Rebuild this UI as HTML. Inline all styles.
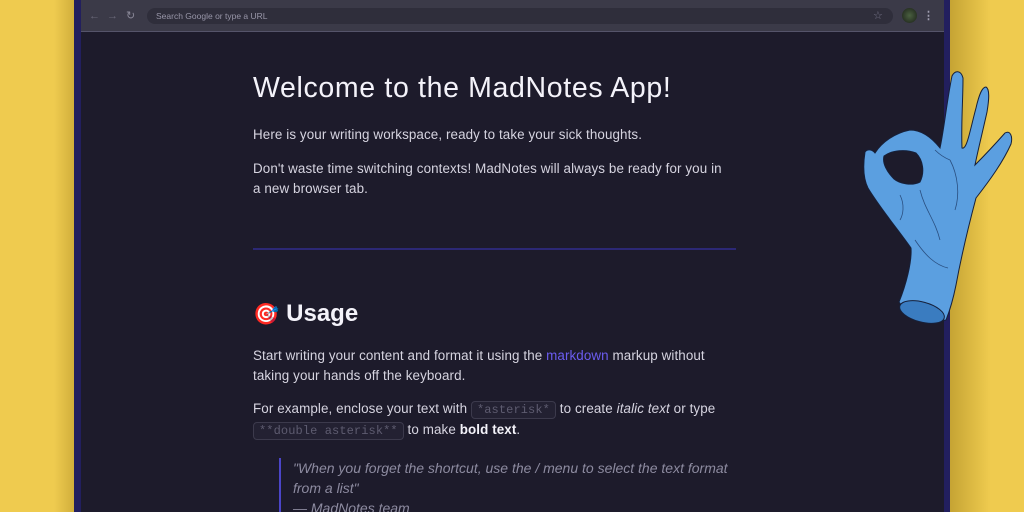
<!DOCTYPE html>
<html><head><meta charset="utf-8"><style>
*{margin:0;padding:0;box-sizing:border-box}
html,body{width:1024px;height:512px;overflow:hidden}
body{background:#efcb4f;position:relative;font-family:"Liberation Sans",sans-serif}
.shadowR{position:absolute;left:950px;top:0;width:40px;height:512px;background:linear-gradient(90deg,rgba(120,90,0,.35),rgba(120,90,0,0))}
.shadowL{position:absolute;left:54px;top:0;width:20px;height:512px;background:linear-gradient(270deg,rgba(120,90,0,.25),rgba(120,90,0,0))}
.frame{position:absolute;left:74px;top:0;width:876px;height:512px;background:#221f5e}
.win{position:absolute;left:81px;top:0;width:863px;height:512px;background:#1d1b2b;overflow:hidden}
.bar{position:absolute;left:0;top:0;width:863px;height:32px;background:#3b3a48;border-bottom:1px solid #55546a}
.url{position:absolute;left:66px;top:8px;width:746px;height:16px;border-radius:8px;background:#2f2e3b;color:#9896a8;font-size:8.5px;line-height:16px;padding-left:9px}
.nav{position:absolute;top:8px;color:#6a6878;font-size:11px;line-height:16px}
.content{position:absolute;left:172px;top:0;width:484px;height:512px;color:#d6d4e0}
h1{position:absolute;top:72px;font-size:28.5px;font-weight:normal;color:#f4f3fa;white-space:nowrap;letter-spacing:.65px}
p{position:absolute;font-size:13.4px;line-height:20px;white-space:nowrap;letter-spacing:.1px}
hr{position:absolute;top:248px;width:483px;border:none;height:2px;background:#2c2875}
h2{position:absolute;top:300px;font-size:24px;color:#f4f3fa;font-weight:bold;white-space:nowrap}
code{font-family:"Liberation Mono",monospace;font-size:12px;color:#5e5c70;border:1px solid #3c3a4c;background:#232132;border-radius:4px;padding:1px 5px}
.q{position:absolute;left:26px;top:458px;border-left:2px solid #4b45c8;padding-left:12px;color:#8d8ba0;font-style:italic;font-size:14px;line-height:20px;white-space:nowrap}
</style></head><body>
<div class="shadowL"></div><div class="shadowR"></div>
<div class="frame"></div>
<div class="win">
 <div class="bar">
  <div class="nav" style="left:8px">&#8592;</div>
  <div class="nav" style="left:26px">&#8594;</div>
  <div class="nav" style="left:45px;color:#8a8898">&#8635;</div>
  <div class="url">Search Google or type a URL</div>
  <div class="nav" style="left:792px;color:#77758a">&#9734;</div>
  <div style="position:absolute;left:821px;top:8px;width:15px;height:15px;border-radius:50%;background:radial-gradient(#4a6040,#1a1f18)"></div>
  <div class="nav" style="left:842px;color:#a09eb0;font-weight:bold">&#8942;</div>
 </div>
 <div class="content">
  <h1>Welcome to the MadNotes App!</h1>
  <p style="top:125px">Here is your writing workspace, ready to take your sick thoughts.</p>
  <p style="top:159px">Don't waste time switching contexts! MadNotes will always be ready for you in<br>a new browser tab.</p>
  <hr>
  <h2><span style="font-size:21px;font-weight:normal;margin-right:7px">🎯</span>Usage</h2>
  <p style="top:346px">Start writing your content and format it using the <span style="color:#6b5cf0">markdown</span> markup without<br>taking your hands off the keyboard.</p>
  <p style="top:399px">For example, enclose your text with <code>*asterisk*</code> to create <i>italic text</i> or type<br><code>**double asterisk**</code> to make <b style="color:#f4f3fa">bold text</b>.</p>
  <div class="q">"When you forget the shortcut, use the / menu to select the text format<br>from a list"<br>— MadNotes team</div>
 </div>
</div>
<svg style="position:absolute;left:0;top:0" width="1024" height="512">
<path d="M899,302 C906,285 912,262 911,248 C900,232 880,208 868,188 C863,178 863,165 865,152 C867,149 872,149 875,153 C882,142 895,133 910,130 C922,130 932,138 940,148 C944,130 947,100 952,76 C955,70 961,70 963,78 C963,100 961,125 962,148 C967,150 970,130 976,108 C979,95 982,87 986,87 C990,89 989,100 987,112 C983,130 978,150 975,165 C985,155 997,142 1005,133 C1010,130 1013,136 1011,144 C1003,162 990,180 976,198 C968,228 961,258 956,285 C953,300 950,310 946,320 C930,324 910,318 899,302 Z" fill="#5b9fe0" stroke="#16203a" stroke-width="1"/>
<path d="M884,156 C892,150 906,149 916,153 C923,160 925,172 920,182 C912,186 900,184 894,179 C887,172 882,163 884,156 Z" fill="#1d1b2b" stroke="#16203a"/>
<ellipse cx="922" cy="312" rx="23" ry="10" transform="rotate(15 922 312)" fill="#3a7cc0" stroke="#16203a"/>
<g fill="none" stroke="#2a4f80" stroke-width=".8">
<path d="M920,190 C925,210 935,220 940,240"/><path d="M950,160 C958,175 960,195 955,210"/><path d="M915,240 C925,255 935,265 948,268"/><path d="M900,195 C905,205 903,215 900,220"/><path d="M935,150 C940,155 945,158 950,160"/>
</g>
</svg>
</body></html>
